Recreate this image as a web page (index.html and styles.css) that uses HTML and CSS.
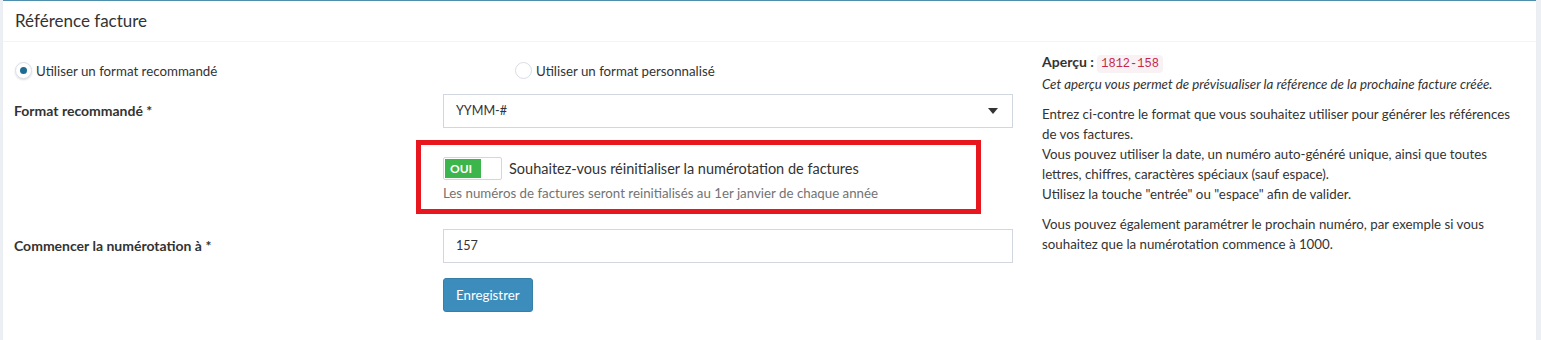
FILE: index.html
```html
<!DOCTYPE html>
<html lang="fr">
<head>
    <meta charset="UTF-8">
    <title>Référence facture</title>
    <link rel="stylesheet" href="styles.css">
</head>
<body>
    <div class="box">
        <div class="box-header">
            <h3 class="box-title">Référence facture</h3>
        </div>

        <div class="box-body">
            <form class="form-col">
                <div class="radio-row">
                    <label class="radio checked"><span class="radio-circle"></span>Utiliser un format recommandé</label>
                    <label class="radio"><span class="radio-circle"></span>Utiliser un format personnalisé</label>
                </div>

                <div class="form-row">
                    <label class="form-label">Format recommandé *</label>
                    <div class="select">
                        <span>YYMM-#</span>
                        <span class="caret"></span>
                    </div>
                </div>

                <div class="form-row switch-row">
                    <div></div>
                    <div class="switch-group">
                        <div class="switch-line">
                            <div class="switch">
                                <span class="switch-on">OUI</span>
                                <span class="switch-handle"></span>
                            </div>
                            <span class="switch-label">Souhaitez-vous réinitialiser la numérotation de factures</span>
                        </div>
                        <p class="help">Les numéros de factures seront reinitialisés au 1er janvier de chaque année</p>
                        <div class="highlight"></div>
                    </div>
                </div>

                <div class="form-row">
                    <label class="form-label">Commencer la numérotation à *</label>
                    <div class="input">157</div>
                </div>

                <div class="form-row">
                    <div></div>
                    <div><button type="button" class="btn">Enregistrer</button></div>
                </div>
            </form>

            <div class="info-col">
                <div><strong>Aperçu :</strong> <code>1812-158</code></div>
                <p><em>Cet aperçu vous permet de prévisualiser la référence de la prochaine facture créée.</em></p>
                <p>Entrez ci-contre le format que vous souhaitez utiliser pour générer les références de vos factures.<br>
                Vous pouvez utiliser la date, un numéro auto-généré unique, ainsi que toutes lettres, chiffres, caractères spéciaux (sauf espace).<br>
                Utilisez la touche "entrée" ou "espace" afin de valider.</p>
                <p>Vous pouvez également paramétrer le prochain numéro, par exemple si vous souhaitez que la numérotation commence à 1000.</p>
            </div>
        </div>
    </div>
</body>
</html>
```

FILE: styles.css
```css
* {
    margin: 0;
    padding: 0;
    box-sizing: border-box;
}

body {
    background-color: #ecf0f5;
    color: #333;
    font-family: Lato, "Liberation Sans", sans-serif;
    font-size: 13.3px;
    line-height: 20px;
    padding: 0 5px 3px 3px;
}

.box {
    background: #fff;
    border-top: 1px solid #4f8fae;
    border-radius: 0 0 3px 3px;
    box-shadow: 0 1px 1px rgba(0, 0, 0, 0.1);
}

.box-header {
    padding: 9px 12px;
    border-bottom: 1px solid #f4f4f4;
}

.box-title {
    font-size: 17px;
    font-weight: normal;
    line-height: 22px;
}

.box-body {
    display: grid;
    grid-template-columns: 1000px 1fr;
    column-gap: 29px;
    padding: 10px 10px 25px;
}

/* left column */
.radio-row {
    display: grid;
    grid-template-columns: 500px 1fr;
    padding-top: 10px;
    margin-bottom: 15px;
}

.radio {
    display: flex;
    align-items: center;
    height: 17px;
    padding-left: 2px;
}

.radio-circle {
    width: 17px;
    height: 17px;
    border-radius: 50%;
    border: 1px solid #d9dde3;
    margin-right: 4px;
    display: flex;
    align-items: center;
    justify-content: center;
}

.radio.checked .radio-circle {
    box-shadow: 0 1px 2px rgba(0, 0, 0, 0.15);
}

.radio.checked .radio-circle::after {
    content: "";
    width: 7px;
    height: 7px;
    border-radius: 50%;
    background: #1f6c93;
}

.form-row {
    display: grid;
    grid-template-columns: 430px 1fr;
    align-items: center;
    margin-bottom: 15px;
}

.form-label {
    font-weight: bold;
    font-size: 14px;
    padding-left: 1px;
}

.select,
.input {
    height: 34px;
    border: 1px solid #d2d6de;
    padding: 6px 12px;
    font-size: 12.6px;
    display: flex;
    align-items: center;
    justify-content: space-between;
}

.caret {
    width: 0;
    height: 0;
    border-left: 5px solid transparent;
    border-right: 5px solid transparent;
    border-top: 6px solid #333;
    margin-right: 2px;
}

.switch-row {
    margin-bottom: 15px;
}

.switch-group {
    position: relative;
    padding: 14px 0 11px;
}

.switch-line {
    display: flex;
    align-items: center;
    gap: 7px;
}

.switch-label {
    font-size: 14.5px;
}

.switch {
    display: flex;
    width: 59px;
    height: 23px;
    border: 1px solid #d6d6d6;
    border-radius: 2px;
    padding: 1px;
}

.switch-on {
    width: 36px;
    background: #3cb54a;
    color: #fff;
    font-size: 12px;
    font-weight: bold;
    line-height: 19px;
    padding-left: 5px;
}

.switch-handle {
    flex: 1;
    background: #fff;
}

.help {
    color: #737373;
    margin-top: 3px;
}

.highlight {
    position: absolute;
    left: -27px;
    top: -3px;
    width: 565px;
    height: 74px;
    border: 5px solid #e8161e;
}

.btn {
    background: #3c8dbc;
    border: 1px solid #367fa9;
    border-radius: 3px;
    color: #fff;
    font-family: inherit;
    font-size: 13.3px;
    line-height: 20px;
    padding: 6px 12px;
    height: 34px;
}

/* right column */
.info-col strong {
    font-size: 14px;
}

.info-col p {
    margin-bottom: 10px;
}

code {
    font-family: "Liberation Mono", monospace;
    font-size: 12px;
    color: #c7254e;
    background: #f9f2f4;
    padding: 2px 4px;
    border-radius: 4px;
}
```
